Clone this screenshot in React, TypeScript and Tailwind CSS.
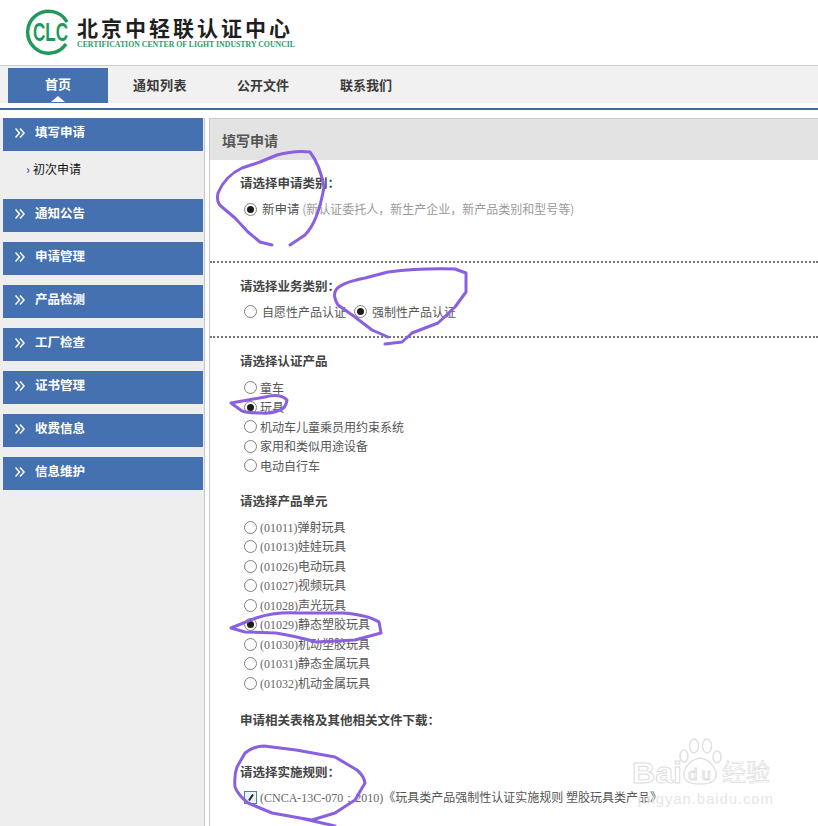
const cjk = "font-['Noto_Sans_CJK_SC','Liberation_Sans',sans-serif]";

const sideMenu = ["通知公告", "申请管理", "产品检测", "工厂检查", "证书管理", "收费信息", "信息维护"];
const products = ["童车", "玩具", "机动车儿童乘员用约束系统", "家用和类似用途设备", "电动自行车"];
const units = [
  ["01011", "弹射玩具"],
  ["01013", "娃娃玩具"],
  ["01026", "电动玩具"],
  ["01027", "视频玩具"],
  ["01028", "声光玩具"],
  ["01029", "静态塑胶玩具"],
  ["01030", "机动塑胶玩具"],
  ["01031", "静态金属玩具"],
  ["01032", "机动金属玩具"],
];

function Radio({ checked }: { checked?: boolean }) {
  return (
    <span className="flex h-[13px] w-[13px] shrink-0 items-center justify-center rounded-full border border-[#808080] bg-white">
      {checked && <span className="h-[7px] w-[7px] rounded-full bg-[#1c1c1c]" />}
    </span>
  );
}

function Heading({ className, children }: { className?: string; children: React.ReactNode }) {
  return <div className={`h-[18px] text-[12.5px] leading-[18px] font-bold text-[#444444] ${className ?? ""}`}>{children}</div>;
}

function Row({ checked, children }: { checked?: boolean; children: React.ReactNode }) {
  return (
    <div className="flex h-[19.5px] items-center gap-[3px] pl-[4px] text-[12px] text-[#555555]">
      <Radio checked={checked} />
      <span>{children}</span>
    </div>
  );
}

function SideItem({ label }: { label: string }) {
  return (
    <div className="flex h-[33px] items-start bg-[#4571b1] pt-[5px] pl-[12px] text-[12.5px] leading-[18px] font-bold text-white">
      <svg className="mt-[5px] mr-[10px] shrink-0" width="10" height="10" viewBox="0 0 10 10" fill="none" stroke="#ffffff" strokeWidth="1.5">
        <path d="M0.5 0.5 L4.5 5 L0.5 9.5" />
        <path d="M5 0.5 L9 5 L5 9.5" />
      </svg>
      {label}
    </div>
  );
}

function Logo() {
  return (
    <div className="flex items-center gap-[2px] pt-[9px] pl-[25px]">
      <svg width="50" height="46" viewBox="0 0 50 46" fill="none">
        <path d="M42 13 A21 21 0 1 0 41 35" stroke="#1f9a5a" strokeWidth="3.5" />
        <text x="8" y="32" fontFamily="Liberation Sans" fontSize="25" fontWeight="700" fill="#1f9a5a" textLength="35" lengthAdjust="spacingAndGlyphs">CLC</text>
      </svg>
      <div>
        <div className="h-[26px] text-[21px] leading-[26px] font-bold tracking-[3px] text-[#1f1f1f]">北京中轻联认证中心</div>
        <div className="font-['Liberation_Serif',serif] text-[7.8px] leading-[10px] font-bold whitespace-nowrap text-[#2d9a68]">
          CERTIFICATION CENTER OF LIGHT INDUSTRY COUNCIL
        </div>
      </div>
    </div>
  );
}

function Scribbles() {
  return (
    <svg className="absolute inset-0" width="818" height="826" fill="none" stroke="#8a60e0" strokeWidth="3" strokeLinecap="round" strokeLinejoin="round">
      <path d="M290 245 L305 235 Q318 222 324 187 Q320 165 310 152 Q295 150 277 155 L260 162 L242 168 Q225 176 218 193 Q216 203 222 207 L235 218 L248 232 L260 242 L272 245" />
      <path d="M388 337 L372 330 L355 317 L338 305 Q332 295 336 290 Q340 283 365 278 L388 272 Q420 268 455 269 L466 273 L466 292 L455 307 L438 323 L412 333 L402 342 L385 344" />
      <path d="M231 403 L248 400 L265 397 Q280 393 287 400 Q286 408 280 410 Q270 414 262 413 Q248 413 242 411 Z" />
      <path d="M231 628 L256 618 Q275 612 296 613 L343 613 Q368 615 379 622 L381 633 L355 640 L316 642 Q295 636 276 633 L245 632 Z" />
      <path d="M335 826 L300 818 L272 813 L248 803 Q238 795 235 787 Q234 775 237 767 L245 753 Q254 746 264 746 L296 750 L335 757 L357 770 Q364 776 365 783 L355 800 L335 813 L312 820 L300 818" />
    </svg>
  );
}

function Watermark() {
  return (
    <svg className="absolute inset-0" width="818" height="826" fill="none">
      <g stroke="#e0e0e0" strokeWidth="1.5">
        <ellipse cx="684" cy="756" rx="4" ry="6" />
        <ellipse cx="694" cy="746" rx="4.5" ry="7" />
        <ellipse cx="707" cy="746" rx="4.5" ry="7" />
        <ellipse cx="717" cy="757" rx="4" ry="6" />
        <path d="M700 758 Q688 760 684 772 Q682 784 700 784 Q718 784 716 772 Q712 760 700 758 Z" />
      </g>
      <g fontFamily="Liberation Sans" stroke="#dcdcdc" strokeWidth="0.9">
        <text x="632" y="783" fontSize="29" fontWeight="700" textLength="50" lengthAdjust="spacingAndGlyphs">Bai</text>
        <text x="688" y="780" fontSize="17" textLength="23">du</text>
      </g>
      <text x="722" y="781" fontFamily="Noto Sans CJK SC" fontSize="24" stroke="#dcdcdc" strokeWidth="0.7">经验</text>
      <text x="638" y="804" fontFamily="Liberation Sans" fontSize="15" fill="#e6e6e6" textLength="135">jingyan.baidu.com</text>
    </svg>
  );
}

export default function App() {
  return (
    <div className={`relative flex h-[826px] w-[818px] flex-col overflow-hidden bg-white ${cjk}`}>
      <div className="h-[65px] shrink-0">
        <Logo />
      </div>
      <div className="h-[45px] shrink-0 border-b-2 border-[#3f6a9f] bg-white">
        <div className="flex h-[38px] items-start border-t border-[#cccccc] bg-[#f1f1f1] pt-[2px] pl-[8px] text-[13px] font-bold text-[#3a3a3a]">
          <div className="relative flex h-[35px] w-[100px] items-center justify-center bg-[#4571b1] pb-[3px] text-white">
            首页
            <span className="absolute bottom-[1px] left-[43px] h-0 w-0 border-x-[7px] border-b-[6px] border-x-transparent border-b-white" />
          </div>
          <div className="ml-[25px] flex h-[34px] items-center tracking-[0.5px]">通知列表</div>
          <div className="ml-[50px] flex h-[34px] items-center">公开文件</div>
          <div className="ml-[51px] flex h-[34px] items-center">联系我们</div>
        </div>
      </div>
      <div className="flex min-h-0 flex-1 pt-[8px]">
        <aside className="h-full w-[205px] shrink-0 border-r border-[#c4c4c4] bg-[#eeeeee]">
          <div className="pl-[3px] pr-[1px]">
            <SideItem label="填写申请" />
            <div className="flex h-[48px] items-start pt-[9px] pl-[23px] text-[12px] leading-[18px] text-[#111111]">
              <span className="w-[7px] font-bold text-[#3a68b0]">›</span>
              初次申请
            </div>
            <div className="flex flex-col gap-[10px]">
              {sideMenu.map((m) => (
                <SideItem key={m} label={m} />
              ))}
            </div>
          </div>
        </aside>
        <main className="ml-[4px] min-w-0 flex-1 border-t border-l border-[#c8c8c8]">
          <div className="h-[41px] bg-[#e3e3e3] pt-[11px] pl-[12px] text-[14px] leading-[20px] font-bold text-[#555555]">填写申请</div>
          <section className="h-[103px] border-b-2 border-dotted border-[#777777] pt-[14px] pl-[30px]">
            <Heading>请选择申请类别：</Heading>
            <div className="mt-[7.5px] flex h-[19.5px] items-center gap-[5px] pl-[4px] text-[12.5px] text-[#555555]">
              <Radio checked />
              <span>
                新申请 <span className="text-[12px] text-[#9a9a9a]">(新认证委托人，新生产企业，新产品类别和型号等)</span>
              </span>
            </div>
          </section>
          <section className="h-[75px] border-b-2 border-dotted border-[#777777] pt-[14px] pl-[30px]">
            <Heading>请选择业务类别：</Heading>
            <div className="mt-[7px] flex h-[19.5px] items-center pl-[4px] text-[12px] text-[#555555]">
              <Radio />
              <span className="ml-[5px] w-[92px]">自愿性产品认证</span>
              <Radio checked />
              <span className="ml-[5px]">强制性产品认证</span>
            </div>
          </section>
          <section className="pt-[14px] pl-[30px]">
            <Heading>请选择认证产品</Heading>
            <div className="mt-[8px]">
              {products.map((p) => (
                <Row key={p} checked={p === "玩具"}>
                  {p}
                </Row>
              ))}
            </div>
            <Heading className="mt-[16px]">请选择产品单元</Heading>
            <div className="mt-[8px]">
              {units.map(([code, name]) => (
                <Row key={code} checked={code === "01029"}>
                  <span className="font-['Liberation_Serif',serif] text-[#666666]">({code})</span>
                  {name}
                </Row>
              ))}
            </div>
            <Heading className="mt-[18px]">申请相关表格及其他相关文件下载：</Heading>
            <Heading className="mt-[34px]">请选择实施规则：</Heading>
            <div className="mt-[7px] flex h-[19.5px] items-center gap-[3px] pl-[4px] text-[12px] whitespace-nowrap text-[#555555]">
              <span className="flex h-[13px] w-[13px] shrink-0 items-center justify-center border border-[#3f8a9a] bg-[#e8f2f8]">
                <svg width="9" height="9" viewBox="0 0 9 9" fill="none">
                  <path d="M3 7.5 L7 1.5" stroke="#222222" strokeWidth="2" />
                </svg>
              </span>
              <span>
                <span className="font-['Liberation_Serif',serif] text-[#666666]">(CNCA-13C-070：2010)</span>《玩具类产品强制性认证实施规则 塑胶玩具类产品》
              </span>
            </div>
          </section>
        </main>
      </div>
      <Watermark />
      <Scribbles />
    </div>
  );
}
